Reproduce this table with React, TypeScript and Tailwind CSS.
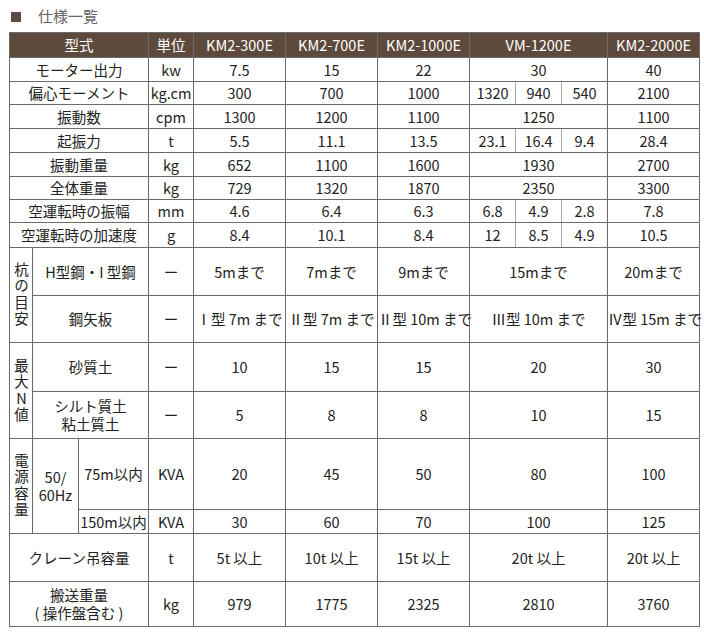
import React from 'react';

const cell = 'border border-[#6b6b6b] text-center align-middle p-0 whitespace-nowrap';
const sub = 'border border-[#6b6b6b] border-x-[#a8a8a8] text-center align-middle p-0 whitespace-nowrap';

// vertical group label, e.g. 杭の目安
const VLabel = ({ text }: { text: string }) => (
  <div className="mx-auto [writing-mode:vertical-rl] [text-orientation:upright] tracking-[2px] leading-[23px]">
    {text}
  </div>
);

type Row = { label: string; unit: string; vals: (string | string[])[]; h: string };

const basic: Row[] = [
  { label: 'モーター出力', unit: 'kw', vals: ['7.5', '15', '22', '30', '40'], h: 'h-[24px]' },
  { label: '偏心モーメント', unit: 'kg.cm', vals: ['300', '700', '1000', ['1320', '940', '540'], '2100'], h: 'h-[23px]' },
  { label: '振動数', unit: 'cpm', vals: ['1300', '1200', '1100', '1250', '1100'], h: 'h-[24px]' },
  { label: '起振力', unit: 't', vals: ['5.5', '11.1', '13.5', ['23.1', '16.4', '9.4'], '28.4'], h: 'h-[24px]' },
  { label: '振動重量', unit: 'kg', vals: ['652', '1100', '1600', '1930', '2700'], h: 'h-[24px]' },
  { label: '全体重量', unit: 'kg', vals: ['729', '1320', '1870', '2350', '3300'], h: 'h-[23px]' },
  { label: '空運転時の振幅', unit: 'mm', vals: ['4.6', '6.4', '6.3', ['6.8', '4.9', '2.8'], '7.8'], h: 'h-[23px]' },
  { label: '空運転時の加速度', unit: 'g', vals: ['8.4', '10.1', '8.4', ['12', '8.5', '4.9'], '10.5'], h: 'h-[25px]' },
];

const Vals = ({ vals }: { vals: (string | string[])[] }) => (
  <>
    {vals.map((v, i) =>
      Array.isArray(v) ? (
        v.map((s, j) => <td key={`${i}-${j}`} className={j === 0 ? cell + ' border-r-[#a8a8a8]' : j === 2 ? cell + ' border-l-[#a8a8a8]' : sub}>{s}</td>)
      ) : (
        <td key={i} colSpan={i === 3 ? 3 : 1} className={cell}>{v}</td>
      )
    )}
  </>
);

export default function App() {
  return (
    <div className="w-[704px] h-[638px] bg-white text-[#222] text-[14.5px] font-['Noto_Sans_CJK_JP','Noto_Sans',sans-serif]">
      <div className="flex items-center gap-[17px] pl-[11px] pt-[6px] h-[27px]">
        <span className="w-[10px] h-[10px] bg-[#5b4b42]" />
        <span className="text-[#666] text-[15px]">仕様一覧</span>
      </div>
      <table className="ml-[9px] mt-[5px] table-fixed border-collapse w-[690px] leading-[18px]">
        <colgroup>
          <col className="w-[23px]" />
          <col className="w-[46px]" />
          <col className="w-[70px]" />
          <col className="w-[45px]" />
          <col className="w-[92px]" />
          <col className="w-[92px]" />
          <col className="w-[92px]" />
          <col className="w-[46px]" />
          <col className="w-[46px]" />
          <col className="w-[46px]" />
          <col className="w-[92px]" />
        </colgroup>
        <tbody>
          <tr className="h-[25px] bg-[#5e4a3d] text-white">
            <td colSpan={3} className={cell}>型式</td>
            <td className={cell}>単位</td>
            <td className={cell}>KM2-300E</td>
            <td className={cell}>KM2-700E</td>
            <td className={cell}>KM2-1000E</td>
            <td colSpan={3} className={cell}>VM-1200E</td>
            <td className={cell}>KM2-2000E</td>
          </tr>
          {basic.map((r) => (
            <tr key={r.label} className={r.h}>
              <td colSpan={3} className={cell}>{r.label}</td>
              <td className={cell}>{r.unit}</td>
              <Vals vals={r.vals} />
            </tr>
          ))}
          <tr className="h-[48px]">
            <td rowSpan={2} className={cell}><VLabel text="杭の目安" /></td>
            <td colSpan={2} className={cell}>H型鋼・I 型鋼</td>
            <td className={cell}>ー</td>
            <Vals vals={['5mまで', '7mまで', '9mまで', '15mまで', '20mまで']} />
          </tr>
          <tr className="h-[47px]">
            <td colSpan={2} className={cell}>鋼矢板</td>
            <td className={cell}>ー</td>
            <Vals vals={['Ⅰ型 7m まで', 'Ⅱ型 7m まで', 'Ⅱ型 10m まで', 'Ⅲ型 10m まで', 'Ⅳ型 15m まで']} />
          </tr>
          <tr className="h-[49px]">
            <td rowSpan={2} className={cell}><VLabel text="最大N値" /></td>
            <td colSpan={2} className={cell}>砂質土</td>
            <td className={cell}>ー</td>
            <Vals vals={['10', '15', '15', '20', '30']} />
          </tr>
          <tr className="h-[47px]">
            <td colSpan={2} className={cell}>シルト質土<br />粘土質土</td>
            <td className={cell}>ー</td>
            <Vals vals={['5', '8', '8', '10', '15']} />
          </tr>
          <tr className="h-[71px]">
            <td rowSpan={2} className={cell}><VLabel text="電源容量" /></td>
            <td rowSpan={2} className={cell}>50/<br />60Hz</td>
            <td className={cell}>75m以内</td>
            <td className={cell}>KVA</td>
            <Vals vals={['20', '45', '50', '80', '100']} />
          </tr>
          <tr className="h-[24px]">
            <td className={cell}>150m以内</td>
            <td className={cell}>KVA</td>
            <Vals vals={['30', '60', '70', '100', '125']} />
          </tr>
          <tr className="h-[48px]">
            <td colSpan={3} className={cell}>クレーン吊容量</td>
            <td className={cell}>t</td>
            <Vals vals={['5t 以上', '10t 以上', '15t 以上', '20t 以上', '20t 以上']} />
          </tr>
          <tr className="h-[45px]">
            <td colSpan={3} className={cell}>搬送重量<br />( 操作盤含む )</td>
            <td className={cell}>kg</td>
            <Vals vals={['979', '1775', '2325', '2810', '3760']} />
          </tr>
        </tbody>
      </table>
    </div>
  );
}
